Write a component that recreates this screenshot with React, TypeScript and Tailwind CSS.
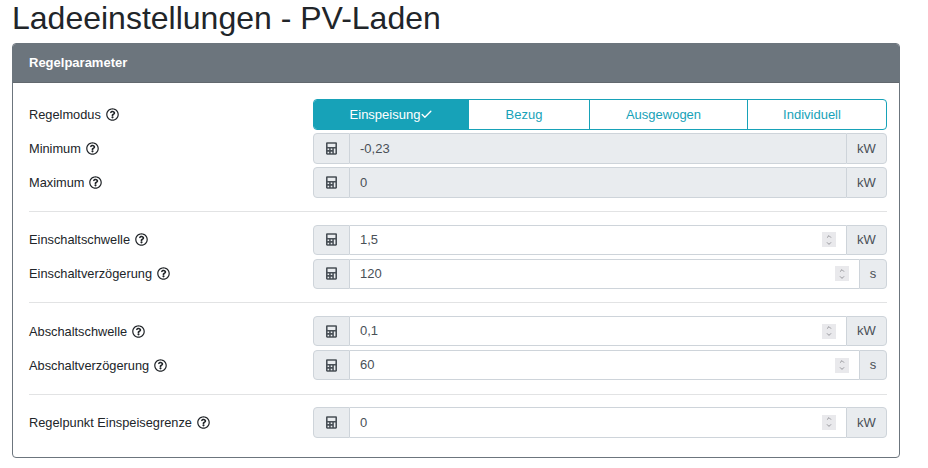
import { Check, ChevronUp, ChevronDown } from "lucide-react";
import { FaCalculator, FaRegQuestionCircle } from "react-icons/fa";

function Label({ text }: { text: string }) {
  return (
    <div className="w-[284px] shrink-0 flex items-center gap-[5px] text-[12.8px] text-[#212529]">
      <span>{text}</span>
      <FaRegQuestionCircle className="w-[13px] h-[13px] text-[#212529]" />
    </div>
  );
}

function Spinner() {
  return (
    <div className="mr-[10px] w-[14px] h-[15px] bg-[#e9e9ec] flex flex-col items-center justify-center text-[#77777c]">
      <ChevronUp className="w-[10px] h-[7px]" strokeWidth={2.5} />
      <ChevronDown className="w-[10px] h-[7px]" strokeWidth={2.5} />
    </div>
  );
}

function Field({ label, value, unit, readOnly }: { label: string; value: string; unit: string; readOnly?: boolean }) {
  const unitWidth = unit === "s" ? "w-[28px]" : "w-[41px]";
  const fieldBg = readOnly ? "bg-[#e9ecef]" : "bg-white";
  return (
    <div className="flex h-[30.6px] items-stretch">
      <Label text={label} />
      <div className="flex flex-1 text-[13px]">
        <div className="w-[37px] shrink-0 flex items-center justify-center bg-[#e9ecef] border border-[#ced4da] rounded-l-[4px]">
          <FaCalculator className="w-[11px] h-[13px] text-[#495057]" />
        </div>
        <div className={`flex-1 flex items-center justify-between pl-[10px] border-y border-[#ced4da] text-[#495057] ${fieldBg}`}>
          <span>{value}</span>
          {!readOnly && <Spinner />}
        </div>
        <div className={`${unitWidth} shrink-0 flex items-center justify-center bg-[#e9ecef] border border-[#ced4da] rounded-r-[4px] text-[#495057]`}>
          {unit}
        </div>
      </div>
    </div>
  );
}

export default function App() {
  return (
    <div className="w-[928px] h-[468px] bg-white overflow-hidden font-['Liberation_Sans',Arial,sans-serif]">
      <h1 className="pl-[12px] h-[43px] text-[32px] leading-[36px] text-[#212529]">Ladeeinstellungen - PV-Laden</h1>
      <div className="ml-[12px] w-[888px] h-[415px] border border-[#6c757d] rounded-[4px] overflow-hidden">
        <div className="h-[39px] bg-[#6c757d] border-b border-[#62686e] flex items-center pl-[16px] text-[13px] font-bold text-white">
          Regelparameter
        </div>
        <div className="pl-[16px] pr-[12px] pt-[16.3px]">
          <div className="flex flex-col gap-[3.4px]">
            <div className="flex h-[30.6px] items-stretch">
              <Label text="Regelmodus" />
              <div className="flex flex-1 text-[13px] text-[#17a2b8] border border-[#17a2b8] rounded-[4px] overflow-hidden">
                <div className="w-[155px] flex items-center justify-center bg-[#17a2b8] text-white">
                  Einspeisung
                  <Check className="w-[13px] h-[13px]" strokeWidth={2.5} />
                </div>
                <div className="w-[121px] pr-[10px] flex items-center justify-center border-r border-[#17a2b8]">Bezug</div>
                <div className="w-[158px] pr-[10px] flex items-center justify-center border-r border-[#17a2b8]">Ausgewogen</div>
                <div className="flex-1 pr-[10px] flex items-center justify-center">Individuell</div>
              </div>
            </div>
            <Field label="Minimum" value="-0,23" unit="kW" readOnly />
            <Field label="Maximum" value="0" unit="kW" readOnly />
          </div>
          <hr className="border-0 border-t border-[#e2e3e4] my-[12.85px]" />
          <div className="flex flex-col gap-[3.4px]">
            <Field label="Einschaltschwelle" value="1,5" unit="kW" />
            <Field label="Einschaltverzögerung" value="120" unit="s" />
          </div>
          <hr className="border-0 border-t border-[#e2e3e4] my-[12.85px]" />
          <div className="flex flex-col gap-[3.4px]">
            <Field label="Abschaltschwelle" value="0,1" unit="kW" />
            <Field label="Abschaltverzögerung" value="60" unit="s" />
          </div>
          <hr className="border-0 border-t border-[#e2e3e4] mt-[13.3px] mb-[12.4px]" />
          <Field label="Regelpunkt Einspeisegrenze" value="0" unit="kW" />
        </div>
      </div>
    </div>
  );
}
